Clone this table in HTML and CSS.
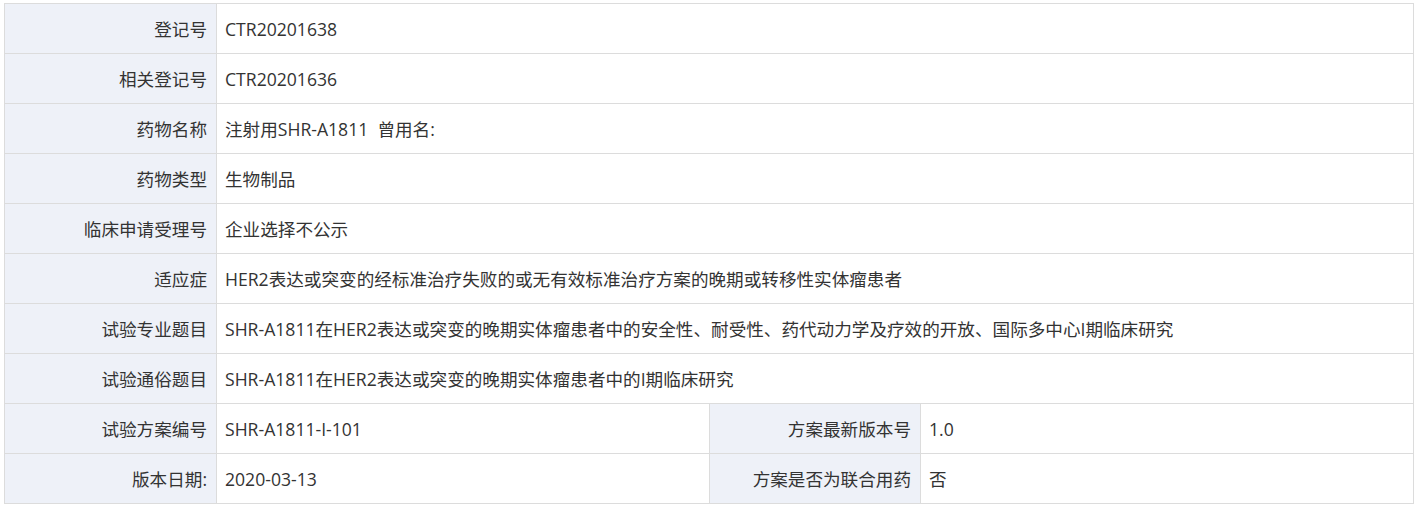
FILE: index.html
```html
<!DOCTYPE html>
<html lang="zh-CN">
<head>
<meta charset="utf-8">
<title>试验信息</title>
<link rel="stylesheet" href="styles.css">
</head>
<body>
<table class="info">
  <colgroup>
    <col class="c1"><col class="c2"><col class="c3"><col class="c4">
  </colgroup>
  <tr><th>登记号</th><td colspan="3">CTR20201638</td></tr>
  <tr><th>相关登记号</th><td colspan="3">CTR20201636</td></tr>
  <tr><th>药物名称</th><td colspan="3">注射用SHR-A1811&nbsp; 曾用名:</td></tr>
  <tr><th>药物类型</th><td colspan="3">生物制品</td></tr>
  <tr><th>临床申请受理号</th><td colspan="3">企业选择不公示</td></tr>
  <tr><th>适应症</th><td colspan="3">HER2表达或突变的经标准治疗失败的或无有效标准治疗方案的晚期或转移性实体瘤患者</td></tr>
  <tr><th>试验专业题目</th><td colspan="3">SHR-A1811在HER2表达或突变的晚期实体瘤患者中的安全性、耐受性、药代动力学及疗效的开放、国际多中心I期临床研究</td></tr>
  <tr><th>试验通俗题目</th><td colspan="3">SHR-A1811在HER2表达或突变的晚期实体瘤患者中的I期临床研究</td></tr>
  <tr><th>试验方案编号</th><td>SHR-A1811-I-101</td><th>方案最新版本号</th><td>1.0</td></tr>
  <tr><th>版本日期:</th><td>2020-03-13</td><th>方案是否为联合用药</th><td>否</td></tr>
</table>
</body>
</html>
```

FILE: styles.css
```css
html, body {
  margin: 0;
  background: #fff;
}
body {
  padding: 3px 6px 0 4px;
  font-family: "Open Sans", "Noto Sans CJK SC", sans-serif;
  font-size: 17.6px;
  color: #333;
}
.info {
  width: 1410px;
  border-collapse: collapse;
  table-layout: fixed;
}
.info .c1 { width: 212px; }
.info .c2 { width: 493px; }
.info .c3 { width: 211px; }
.info .c4 { width: auto; }
.info th,
.info td {
  border: 1px solid #dcdcdc;
  height: 49px;
  padding: 0 8px;
  font-weight: normal;
  white-space: nowrap;
  vertical-align: middle;
  line-height: 24px;
}
.info th {
  background: #eef1f8;
  text-align: right;
  padding-right: 9px;
}
.info td {
  text-align: left;
  background: #fff;
}
```
